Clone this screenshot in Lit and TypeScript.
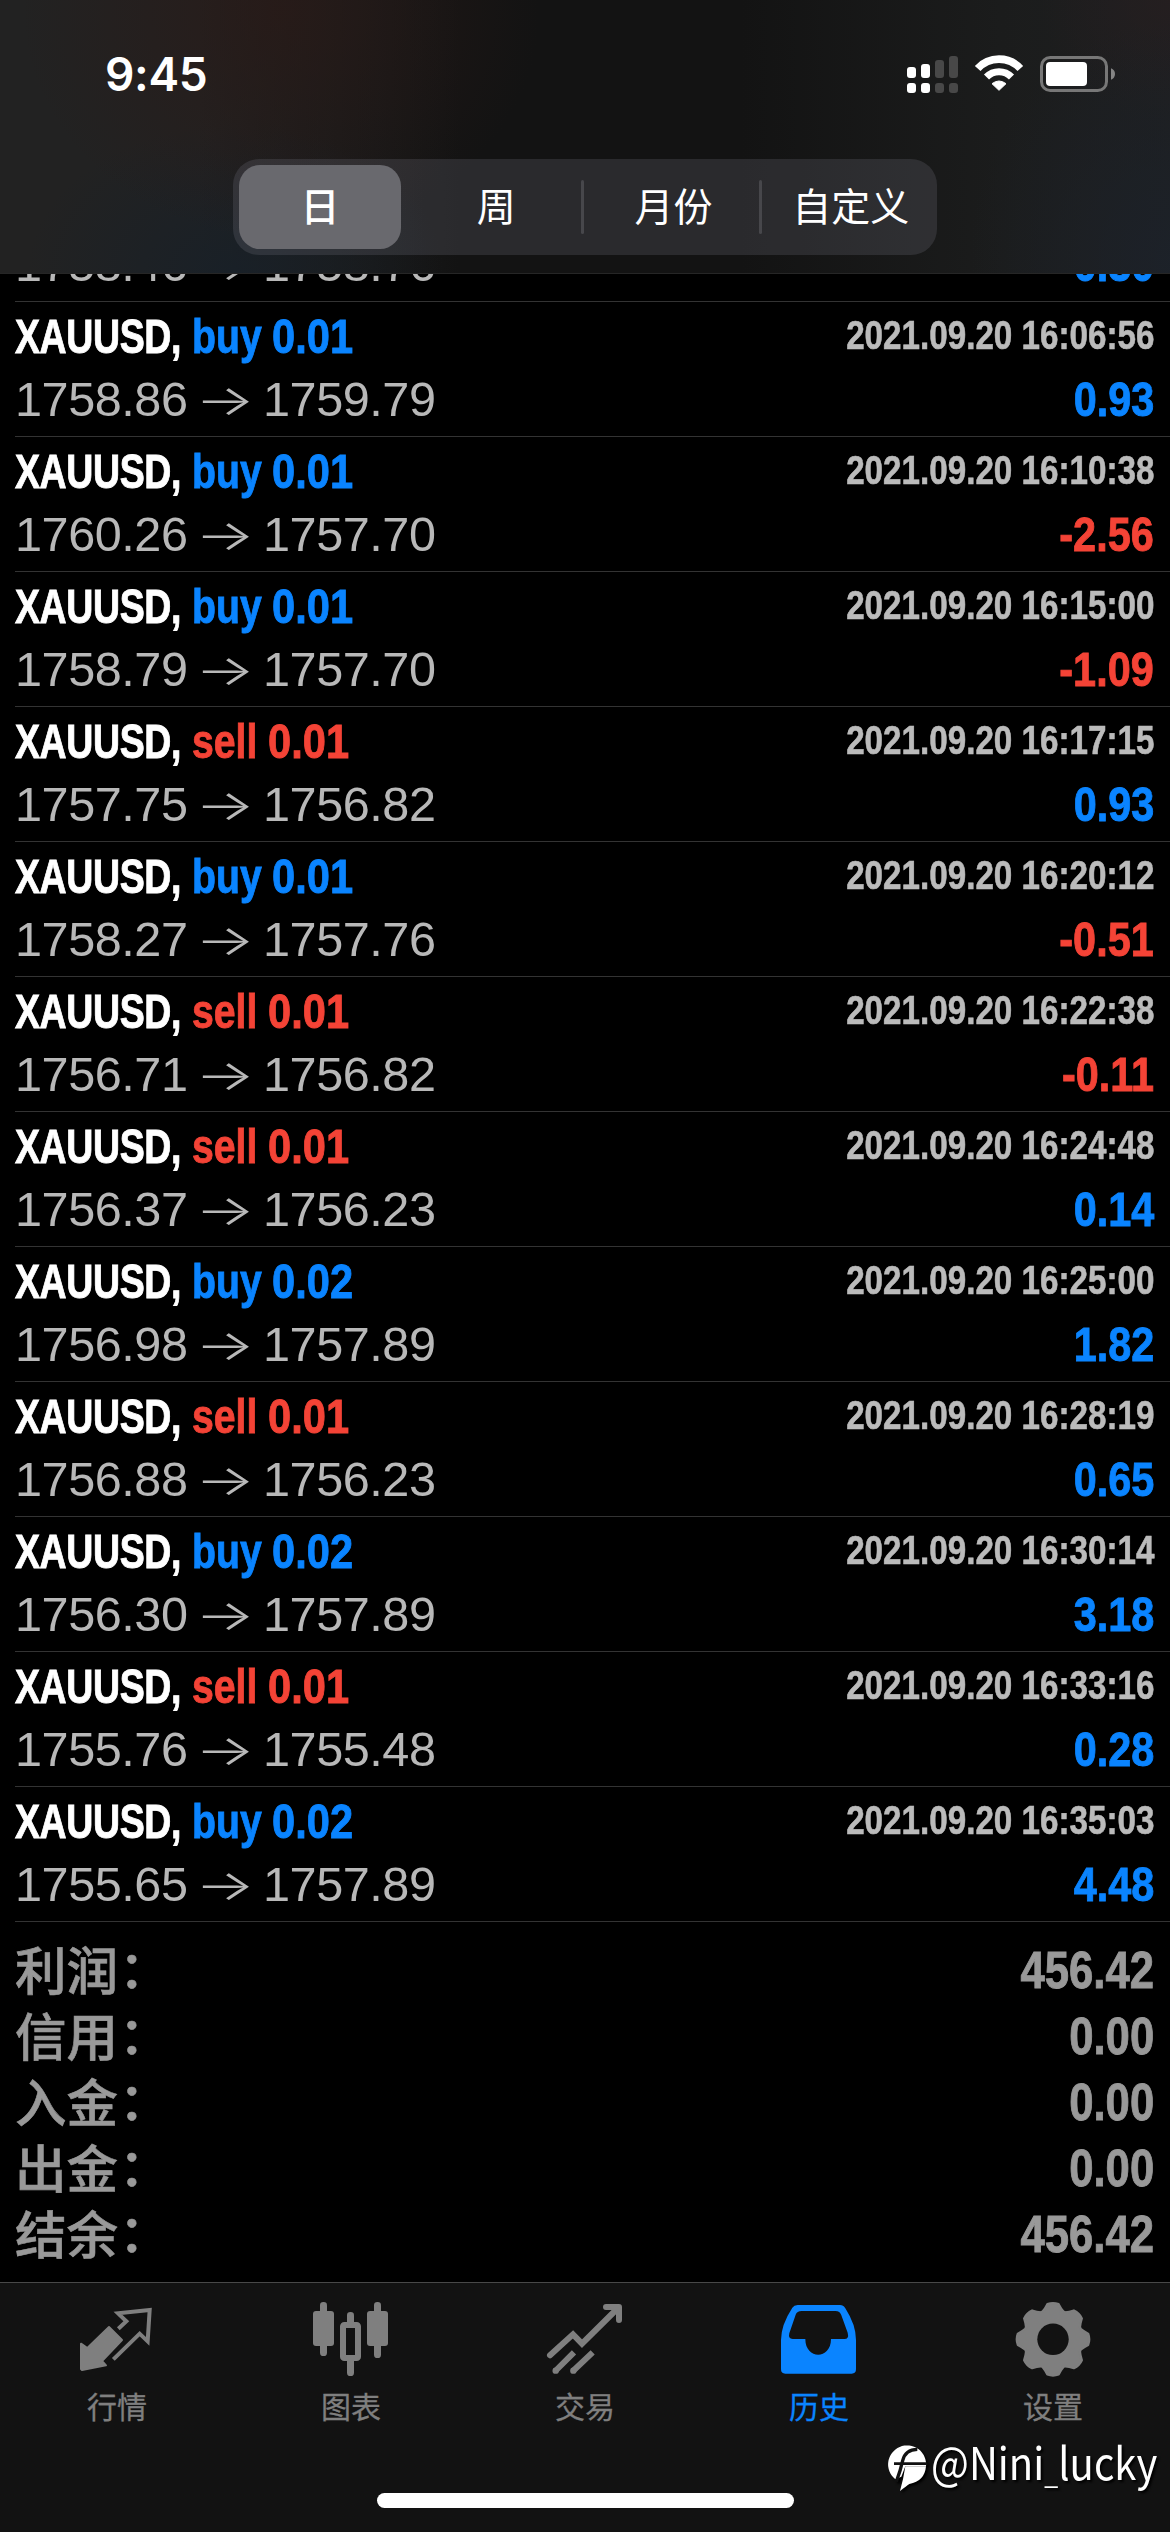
import { LitElement, html, css, svg } from "lit";
import { customElement } from "lit/decorators.js";
import { classMap } from "lit/directives/class-map.js";

interface Deal {
  side: "buy" | "sell";
  volume: string;
  open: string;
  close: string;
  time: string;
  profit: string;
}

const deal = (side: "buy" | "sell", volume: string, open: string, close: string, time: string, profit: string): Deal => ({
  side, volume, open, close, time: `2021.09.20 ${time}`, profit,
});

const DEALS: Deal[] = [
  deal("buy", "0.01", "1758.86", "1759.79", "16:06:56", "0.93"),
  deal("buy", "0.01", "1760.26", "1757.70", "16:10:38", "-2.56"),
  deal("buy", "0.01", "1758.79", "1757.70", "16:15:00", "-1.09"),
  deal("sell", "0.01", "1757.75", "1756.82", "16:17:15", "0.93"),
  deal("buy", "0.01", "1758.27", "1757.76", "16:20:12", "-0.51"),
  deal("sell", "0.01", "1756.71", "1756.82", "16:22:38", "-0.11"),
  deal("sell", "0.01", "1756.37", "1756.23", "16:24:48", "0.14"),
  deal("buy", "0.02", "1756.98", "1757.89", "16:25:00", "1.82"),
  deal("sell", "0.01", "1756.88", "1756.23", "16:28:19", "0.65"),
  deal("buy", "0.02", "1756.30", "1757.89", "16:30:14", "3.18"),
  deal("sell", "0.01", "1755.76", "1755.48", "16:33:16", "0.28"),
  deal("buy", "0.02", "1755.65", "1757.89", "16:35:03", "4.48"),
];

const TOTALS: [string, string][] = [
  ["利润", "456.42"],
  ["信用", "0.00"],
  ["入金", "0.00"],
  ["出金", "0.00"],
  ["结余", "456.42"],
];

/* Eight-toothed gear outline around the origin. */
const gearPath = (): string => {
  const pt = (r: number, deg: number) => {
    const a = (deg * Math.PI) / 180;
    return `${(r * Math.sin(a)).toFixed(2)} ${(-r * Math.cos(a)).toFixed(2)}`;
  };
  let d = "";
  for (let k = 0; k < 8; k++) {
    const c = k * 45;
    d += `${k ? "L" : "M"}${pt(29.5, c - 20.5)}Q${pt(31.5, c - 14.5)} ${pt(35.5, c - 9)}`;
    d += `Q${pt(37.2, c)} ${pt(35.5, c + 9)}Q${pt(31.5, c + 14.5)} ${pt(29.5, c + 20.5)}`;
  }
  return d + "Z";
};

const ICONS = {
  quotes: { box: "51 24 240 240", art: svg`
    <path fill="currentColor" stroke="currentColor" stroke-width="6" stroke-linejoin="round" d="M63 161 82 174 147 111 186 150 126 213 138 226 66 240 63 237Z"/>
    <path fill="none" stroke="currentColor" stroke-width="12" d="M175 116 199 94 174 70 269 60 263 154 239 131 160 208"/>` },
  chart: { box: "753 24 240 240", art: svg`
    <g fill="currentColor">
      <rect x="759" y="63" width="63" height="105" rx="9"/><rect x="780" y="36" width="21" height="162" rx="10"/>
      <rect x="921" y="63" width="63" height="105" rx="9"/><rect x="942" y="36" width="21" height="168" rx="10"/>
      <rect x="861" y="66" width="21" height="45" rx="10"/><rect x="861" y="200" width="21" height="58" rx="10"/>
    </g>
    <rect x="849" y="105" width="45" height="99" rx="4" fill="#121212" stroke="currentColor" stroke-width="18"/>` },
  trade: { box: "45 24 240 240", art: svg`
    <g fill="none" stroke="currentColor" stroke-width="18">
      <path stroke-linecap="round" d="M60 196 129 133 156 161 264 54"/>
      <path stroke-linecap="round" stroke-linejoin="round" d="M228 51H267V90"/>
      <path d="M76 243 132 187M129 243 188 187"/>
    </g>
    <g fill="currentColor"><circle cx="77" cy="242" r="9.5"/><circle cx="130" cy="242" r="9.5"/></g>` },
  history: { box: "747 24 240 240", art: svg`
    <path fill="currentColor" fill-rule="evenodd" d="M803 45H930Q940 45 946 55Q978 105 978 150V238Q978 251 965 251H766Q753 251 753 238V150Q753 105 787 53Q792 45 803 45ZM815 63Q801 63 797 74L778 130Q774 147 788 147H826C826 210 903 210 903 147H943Q958 147 953 128L934 76Q930 63 916 63Z"/>` },
  settings: { box: "-40 -41.3 80 80", art: svg`
    <path fill="currentColor" stroke="currentColor" stroke-width="2.5" stroke-linejoin="round" d=${gearPath()}/>
    <circle r="15.7" fill="#121212"/>` },
};

type IconName = keyof typeof ICONS;

@customElement("status-bar")
class StatusBar extends LitElement {
  static styles = css`
    :host { display: flex; height: 159px; box-sizing: border-box; padding: 40px 30px 0 105px; justify-content: space-between; align-items: flex-start; }
    .time { font: 600 46px/1 Inter, sans-serif; color: #fff; margin-top: 11px; letter-spacing: -0.3px; }
    .signs { display: block; width: 250px; height: 70px; }
  `;
  render() {
    return html`
      <span class="time">9:45</span>
      <svg class="signs" viewBox="0 0 750 210">
        <g fill="#fff">
          <rect x="51" y="81" width="27" height="33" rx="9"/><rect x="93" y="72" width="27" height="42" rx="9"/>
          <rect x="51" y="129" width="27" height="30" rx="9"/><rect x="93" y="129" width="27" height="30" rx="9"/>
        </g>
        <g fill="#484848">
          <rect x="135" y="60" width="27" height="54" rx="9"/><rect x="177" y="48" width="27" height="66" rx="9"/>
          <rect x="135" y="129" width="27" height="30" rx="9"/><rect x="177" y="129" width="27" height="30" rx="9"/>
        </g>
        <g fill="none" stroke="#fff">
          <path stroke-width="23" d="M263 85.500A87 87 0 0 1 391 85.500"/>
          <path stroke-width="21" d="M289.500 111A52 52 0 0 1 364.500 111"/>
        </g>
        <path fill="#fff" stroke="#fff" stroke-width="3" stroke-linejoin="round" d="M327 151 306 131Q327 115 348 131Z"/>
        <rect x="454.500" y="52.500" width="195" height="99" rx="26" fill="none" stroke="#777" stroke-width="9"/>
        <rect x="468" y="66" width="123" height="72" rx="12" fill="#fff"/>
        <path fill="#858585" d="M663 85Q675 90 675 102Q675 114 663 119Z"/>
      </svg>`;
  }
}

@customElement("period-picker")
class PeriodPicker extends LitElement {
  static styles = css`
    :host { display: flex; justify-content: center; }
    .track { display: flex; width: 704px; height: 96px; border-radius: 26px; background: rgba(118, 118, 128, 0.24); box-sizing: border-box; }
    .seg { flex: 1; display: flex; align-items: center; justify-content: center; color: #fff; font: 400 39px/1 "Noto Sans CJK SC", sans-serif; box-sizing: border-box; padding-bottom: 5px; }
    .wide { padding-left: 5px; }
    .on { flex: none; width: 162px; height: 84px; margin: 6px 9px 6px 6px; border-radius: 21px; background: #69696e; font-weight: 500; }
    .bar { width: 3px; height: 54px; border-radius: 2px; background: #47474b; align-self: center; margin: 0 -2px 0 -1px; }
  `;
  render() {
    return html`<div class="track">
      <div class="seg on">日</div>
      <div class="seg">周</div><div class="bar"></div>
      <div class="seg wide">月份</div><div class="bar"></div>
      <div class="seg wide">自定义</div>
    </div>`;
  }
}

@customElement("deal-row")
class DealRow extends LitElement {
  static properties = { deal: { attribute: false } };
  declare deal: Deal;
  static styles = css`
    :host { display: block; flex: none; height: 135px; box-sizing: border-box; margin-left: 15px; padding: 3px 16px 0 0; border-bottom: 1px solid #333; font-family: "Liberation Sans", Arial, sans-serif; }
    .line { display: flex; justify-content: space-between; align-items: flex-start; height: 63px; line-height: 63px; font-size: 49px; white-space: nowrap; }
    .head { display: flex; font-weight: 700; -webkit-text-stroke: 0.9px currentColor; }
    .symbol { width: 177px; color: #fff; transform: scaleX(0.765); transform-origin: 0 0; letter-spacing: -0.5px; }
    .kind { display: flex; }
    .side { transform: scaleX(0.8); transform-origin: 0 0; }
    .buy .side { width: 80px; }
    .sell .side { width: 76px; }
    .volume { transform: scaleX(0.85); transform-origin: 0 0; }
    .time { font-size: 40px; font-weight: 700; line-height: 61px; color: #bbb; transform: scaleX(0.83); transform-origin: 100% 0; -webkit-text-stroke: 0.6px currentColor; }
    .prices { display: flex; color: #b8b8b8; font-size: 48.6px; }
    .price { width: 175px; letter-spacing: -0.45px; }
    .arrow { width: 70px; margin-right: 3px; text-align: center; font-size: 42px; font-family: Inter, sans-serif; font-weight: 300; transform: scaleX(1.5); }
    .profit { font-weight: 700; transform: scaleX(0.845); transform-origin: 100% 0; -webkit-text-stroke: 0.9px currentColor; }
    .buy, .gain { color: #0a84ff; }
    .sell, .loss { color: #f44336; }
  `;
  render() {
    const d = this.deal;
    const loss = d.profit.startsWith("-");
    return html`
      <div class="line">
        <div class="head">
          <span class="symbol">XAUUSD,</span>
          <span class=${classMap({ kind: true, buy: d.side === "buy", sell: d.side === "sell" })}><span class="side">${d.side}</span><span class="volume">${d.volume}</span></span>
        </div>
        <span class="time">${d.time}</span>
      </div>
      <div class="line">
        <div class="prices"><span class="price">${d.open}</span><span class="arrow">→</span><span class="price">${d.close}</span></div>
        <span class=${classMap({ profit: true, gain: !loss, loss })}>${d.profit}</span>
      </div>`;
  }
}

@customElement("tab-item")
class TabItem extends LitElement {
  static properties = { icon: {}, label: {}, active: { type: Boolean, reflect: true } };
  declare icon: IconName;
  declare label: string;
  declare active: boolean;
  static styles = css`
    :host { flex: 1; display: flex; flex-direction: column; align-items: center; color: #7f7f7f; }
    :host([active]) { color: #0a84ff; }
    .icon { display: block; width: 80px; height: 80px; }
    .label { font: 400 30px/44px "Noto Sans CJK SC", sans-serif; margin-top: 5px; -webkit-text-stroke: 0.3px currentColor; }
  `;
  render() {
    const { box, art } = ICONS[this.icon];
    return html`<svg class="icon" viewBox=${box}>${art}</svg><span class="label">${this.label}</span>`;
  }
}

@customElement("app-root")
class AppRoot extends LitElement {
  static styles = css`
    :host { display: flex; flex-direction: column; position: relative; width: 1170px; height: 2532px; background: #000; overflow: hidden; }
    .top {
      flex: none; height: 274px; box-sizing: border-box; border-bottom: 1px solid #262626;
      background:
        radial-gradient(ellipse 260px 230px at 280px 10px, rgba(42, 26, 23, 0.75), rgba(42, 26, 23, 0) 100%),
        radial-gradient(ellipse 210px 150px at 235px 274px, rgba(24, 32, 40, 0.9), rgba(24, 32, 40, 0) 100%),
        radial-gradient(ellipse 200px 240px at 1170px 260px, rgba(28, 34, 43, 0.8), rgba(28, 34, 43, 0) 100%),
        radial-gradient(ellipse 130px 120px at 1170px 0, rgba(38, 30, 32, 0.8), rgba(38, 30, 32, 0) 100%),
        linear-gradient(90deg, #222 0, #222 200px, #131313 460px, #131313 740px, #1b1c1c 1000px, #1e1f20 1170px);
    }
    .cut { flex: none; height: 28px; overflow: hidden; display: flex; flex-direction: column; justify-content: flex-end; }
    .totals { flex: 1; display: flex; flex-direction: column; padding: 15px 16px 0 15px; color: #999; }
    .total { display: flex; justify-content: space-between; align-items: flex-start; height: 66px; }
    .name { display: flex; font: 500 51.5px/62px "Noto Sans CJK SC", sans-serif; -webkit-text-stroke: 0.6px currentColor; }
    .colon { transform: translate(1px, -2px); }
    .sum { font: 700 52px/66px "Liberation Sans", Arial, sans-serif; transform: scaleX(0.84); transform-origin: 100% 0; -webkit-text-stroke: 0.9px currentColor; }
    .tabs { flex: none; height: 250px; box-sizing: border-box; border-top: 1px solid #484848; background: #121212; display: flex; flex-direction: column; align-items: center; justify-content: space-between; padding: 15px 0 24px; }
    .items { display: flex; width: 100%; }
    .home { width: 417px; height: 15px; border-radius: 8px; background: #fff; }
    .mark { position: absolute; left: 885px; top: 2440px; display: flex; align-items: flex-start; filter: drop-shadow(2px 2px 1px #000); }
    .logo { display: block; width: 46px; height: 54px; }
    .handle { width: 228px; font: 400 45px/42px "Noto Sans CJK SC", sans-serif; color: #fff; white-space: nowrap; transform: scaleX(0.89); transform-origin: 0 0; }
    .dash { display: inline-block; font-size: 28px; transform: translateY(4px); }
  `;
  render() {
    const hidden = deal("buy", "0.01", "1758.46", "1758.76", "16:03:20", "0.30");
    return html`
      <div class="top"><status-bar></status-bar><period-picker></period-picker></div>
      <div class="cut"><deal-row .deal=${hidden}></deal-row></div>
      ${DEALS.map((d) => html`<deal-row .deal=${d}></deal-row>`)}
      <div class="totals">
        ${TOTALS.map(([n, v]) => html`<div class="total"><span class="name">${n}<span class="colon">：</span></span><span class="sum">${v}</span></div>`)}
      </div>
      <div class="tabs">
        <div class="items">
          <tab-item icon="quotes" label="行情"></tab-item>
          <tab-item icon="chart" label="图表"></tab-item>
          <tab-item icon="trade" label="交易"></tab-item>
          <tab-item icon="history" label="历史" active></tab-item>
          <tab-item icon="settings" label="设置"></tab-item>
        </div>
        <div class="home"></div>
      </div>
      <div class="mark">
        <svg class="logo" viewBox="75 60 138 162">
          <path d="M106 178A57 57 0 1 1 198 139H136L124 170Z" fill="#fff"/>
          <path d="M109 185Q122 150 128 122Q136 88 172 88" fill="none" stroke="#121212" stroke-width="10"/>
          <path d="M102 131H202" stroke="#121212" stroke-width="8"/>
          <path d="M136 139H198Q194 184 148 192Q138 199 120 213Q130 180 136 139Z" fill="#fff"/>
        </svg>
        <span class="handle">@Nini<span class="dash">_</span>lucky</span>
      </div>`;
  }
}
